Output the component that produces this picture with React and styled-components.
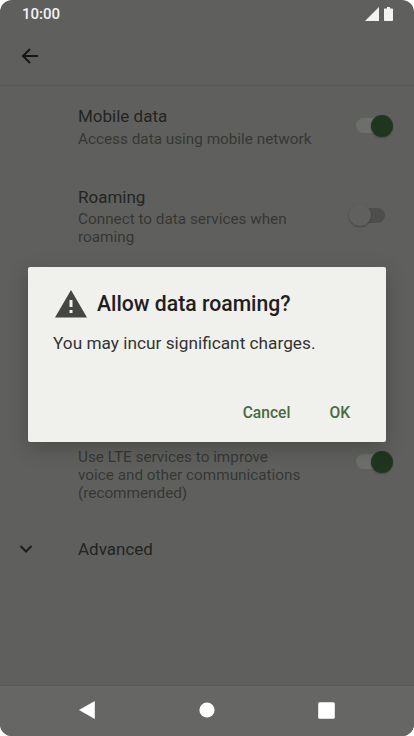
import React from "react";
import styled, { createGlobalStyle } from "styled-components";

const Global = createGlobalStyle`
  html, body {
    margin: 0;
    padding: 0;
    background: #fff;
  }
  * { box-sizing: border-box; }
`;

const Phone = styled.div`
  width: 414px;
  height: 736px;
  background: #5f605d;
  border-radius: 12px;
  overflow: hidden;
  display: flex;
  flex-direction: column;
  position: relative;
  font-family: Roboto, "Liberation Sans", sans-serif;
`;

const StatusBar = styled.div`
  height: 26px;
  flex: none;
  display: flex;
  align-items: center;
  justify-content: space-between;
  padding: 1px 21px 0 22px;
  color: #f2f2f2;
  font-size: 15px;
  font-weight: 500;
`;

const StatusIcons = styled.div`
  display: flex;
  align-items: center;
  gap: 5px;
`;

const AppBar = styled.div`
  height: 60px;
  flex: none;
  display: flex;
  align-items: center;
  padding-left: 18px;
  border-bottom: 1px solid #585856;
`;

const Content = styled.div`
  flex: 1;
  display: flex;
  flex-direction: column;
`;

const Row = styled.div`
  display: flex;
  min-height: ${(p) => p.$height || 80}px;
  padding: 18px 21px 18px 78px;
  position: relative;
`;

// rows that sit fully behind the dialog
const HiddenRows = styled.div`
  height: 139px;
  flex: none;
`;

const RowText = styled.div`
  flex: 1;
  max-width: 240px;
`;

const Title = styled.div`
  font-size: 17px;
  line-height: 24px;
  color: #232422;
`;

const Sub = styled.div`
  font-size: 15.3px;
  line-height: 18px;
  color: #363735;
  margin-top: ${(p) => (p.$tight ? 1 : 2)}px;
  white-space: pre-line;
`;

const Switch = styled.div`
  position: absolute;
  right: ${(p) => (p.$on ? 21 : 30)}px;
  top: ${(p) => p.$top}px;
  width: ${(p) => (p.$on ? 37 : 35)}px;
  height: 22px;
  &::before {
    content: "";
    position: absolute;
    left: ${(p) => (p.$on ? 0 : 10)}px;
    right: ${(p) => (p.$on ? 0 : -1)}px;
    top: ${(p) => (p.$on ? 3 : 4)}px;
    height: 15px;
    border-radius: 8px;
    background: ${(p) => (p.$on ? "#6c6f6a" : "#4e4e4d")};
  }
  &::after {
    content: "";
    position: absolute;
    ${(p) => (p.$on ? "right: 0;" : "left: 0;")}
    top: 0;
    width: 22px;
    height: 22px;
    border-radius: 50%;
    background: ${(p) => (p.$on ? "#1f361e" : "#60605f")};
    box-shadow: 0 1px 2px rgba(0, 0, 0, 0.3);
  }
`;

const AdvancedRow = styled.div`
  display: flex;
  align-items: center;
  height: 48px;
  margin-top: 5px;
  padding-left: 17px;
  font-size: 17px;
  color: #232422;
`;

const AdvancedLabel = styled.span`
  margin-left: 43px;
`;

const NavBar = styled.div`
  height: 51px;
  flex: none;
  background: #666665;
  border-top: 1px solid #595957;
  display: flex;
  align-items: center;
`;

const NavSlot = styled.div`
  position: absolute;
  left: ${(p) => p.$x}px;
  bottom: 17px;
  width: 18px;
  height: 18px;
  display: flex;
  align-items: center;
  justify-content: center;
`;

const Dialog = styled.div`
  position: absolute;
  left: 28px;
  top: 267px;
  width: 358px;
  height: 175px;
  background: #f0f1ec;
  border-radius: 2px;
  box-shadow: 0 6px 20px rgba(0, 0, 0, 0.22);
  display: flex;
  flex-direction: column;
  padding: 22px 25px 0;
`;

const DialogHead = styled.div`
  display: flex;
  align-items: center;
  gap: 10px;
  padding-left: 2px;
  font-size: 21.2px;
  font-weight: 500;
  line-height: 30px;
  color: #1f201e;
`;

const DialogBody = styled.div`
  font-size: 17.25px;
  line-height: 22px;
  color: #333432;
  margin-top: 13px;
`;

const DialogActions = styled.div`
  display: flex;
  justify-content: flex-end;
  gap: 39px;
  padding-right: 11px;
  margin-top: 49px;
`;

const Action = styled.span`
  font-size: 15.6px;
  font-weight: 500;
  line-height: 20px;
  color: #4a6a42;
`;

export default function App() {
  return (
    <>
      <Global />
      <Phone>
        <StatusBar>
          <span>10:00</span>
          <StatusIcons>
            <svg width="14" height="14" viewBox="0 0 14 14">
              <path d="M0 14 L14 0 V14 Z" fill="#f2f2f2" />
            </svg>
            <svg width="9" height="14" viewBox="0 0 9 14">
              <path d="M3 0 H6 V1.5 H8.2 Q9 1.5 9 2.3 V13.2 Q9 14 8.2 14 H.8 Q0 14 0 13.2 V2.3 Q0 1.5 .8 1.5 H3 Z" fill="#f2f2f2" />
            </svg>
          </StatusIcons>
        </StatusBar>
        <AppBar>
          <svg width="24" height="24" viewBox="0 0 24 24">
            <path d="M20 12 H5 M12 5 L5 12 L12 19" fill="none" stroke="#161715" strokeWidth="2" />
          </svg>
        </AppBar>
        <Content>
          <Row $height={81}>
            <RowText>
              <Title>Mobile data</Title>
              <Sub>Access data using mobile network</Sub>
            </RowText>
            <Switch $on $top={29} />
          </Row>
          <Row $height={98}>
            <RowText>
              <Title>Roaming</Title>
              <Sub $tight>Connect to data services when roaming</Sub>
            </RowText>
            <Switch $top={37} />
          </Row>
          <HiddenRows />
          <Row $height={116}>
            <RowText>
              <Title>&nbsp;</Title>
              <Sub>{"Use LTE services to improve\nvoice and other communications\n(recommended)"}</Sub>
            </RowText>
            <Switch $on $top={47} />
          </Row>
          <AdvancedRow>
            <svg width="18" height="18" viewBox="0 0 18 18">
              <path d="M3.5 6 L9 11.5 L14.5 6" fill="none" stroke="#1d1e1c" strokeWidth="2" />
            </svg>
            <AdvancedLabel>Advanced</AdvancedLabel>
          </AdvancedRow>
        </Content>
        <NavBar>
          <NavSlot $x={78}>
            <svg width="16" height="18" viewBox="0 0 16 18">
              <path d="M15.5 .5 V17.5 L.5 9 Z" fill="#fff" stroke="#fff" strokeLinejoin="round" strokeWidth=".6" />
            </svg>
          </NavSlot>
          <NavSlot $x={198}>
            <svg width="16" height="16" viewBox="0 0 16 16">
              <circle cx="8" cy="8" r="7.6" fill="#fff" />
            </svg>
          </NavSlot>
          <NavSlot $x={317}>
            <svg width="17" height="17" viewBox="0 0 17 17">
              <rect x=".2" y=".2" width="16.6" height="16.6" rx="1.5" fill="#fff" />
            </svg>
          </NavSlot>
        </NavBar>
        <Dialog>
          <DialogHead>
            <svg width="32" height="28" viewBox="0 0 32 28">
              <path fillRule="evenodd" d="M16 0 L32 27.5 H0 Z M14.5 10 V17 H17.5 V10 Z M14.5 20 V23 H17.5 V20 Z" fill="#444741" />
            </svg>
            Allow data roaming?
          </DialogHead>
          <DialogBody>You may incur significant charges.</DialogBody>
          <DialogActions>
            <Action>Cancel</Action>
            <Action>OK</Action>
          </DialogActions>
        </Dialog>
      </Phone>
    </>
  );
}
